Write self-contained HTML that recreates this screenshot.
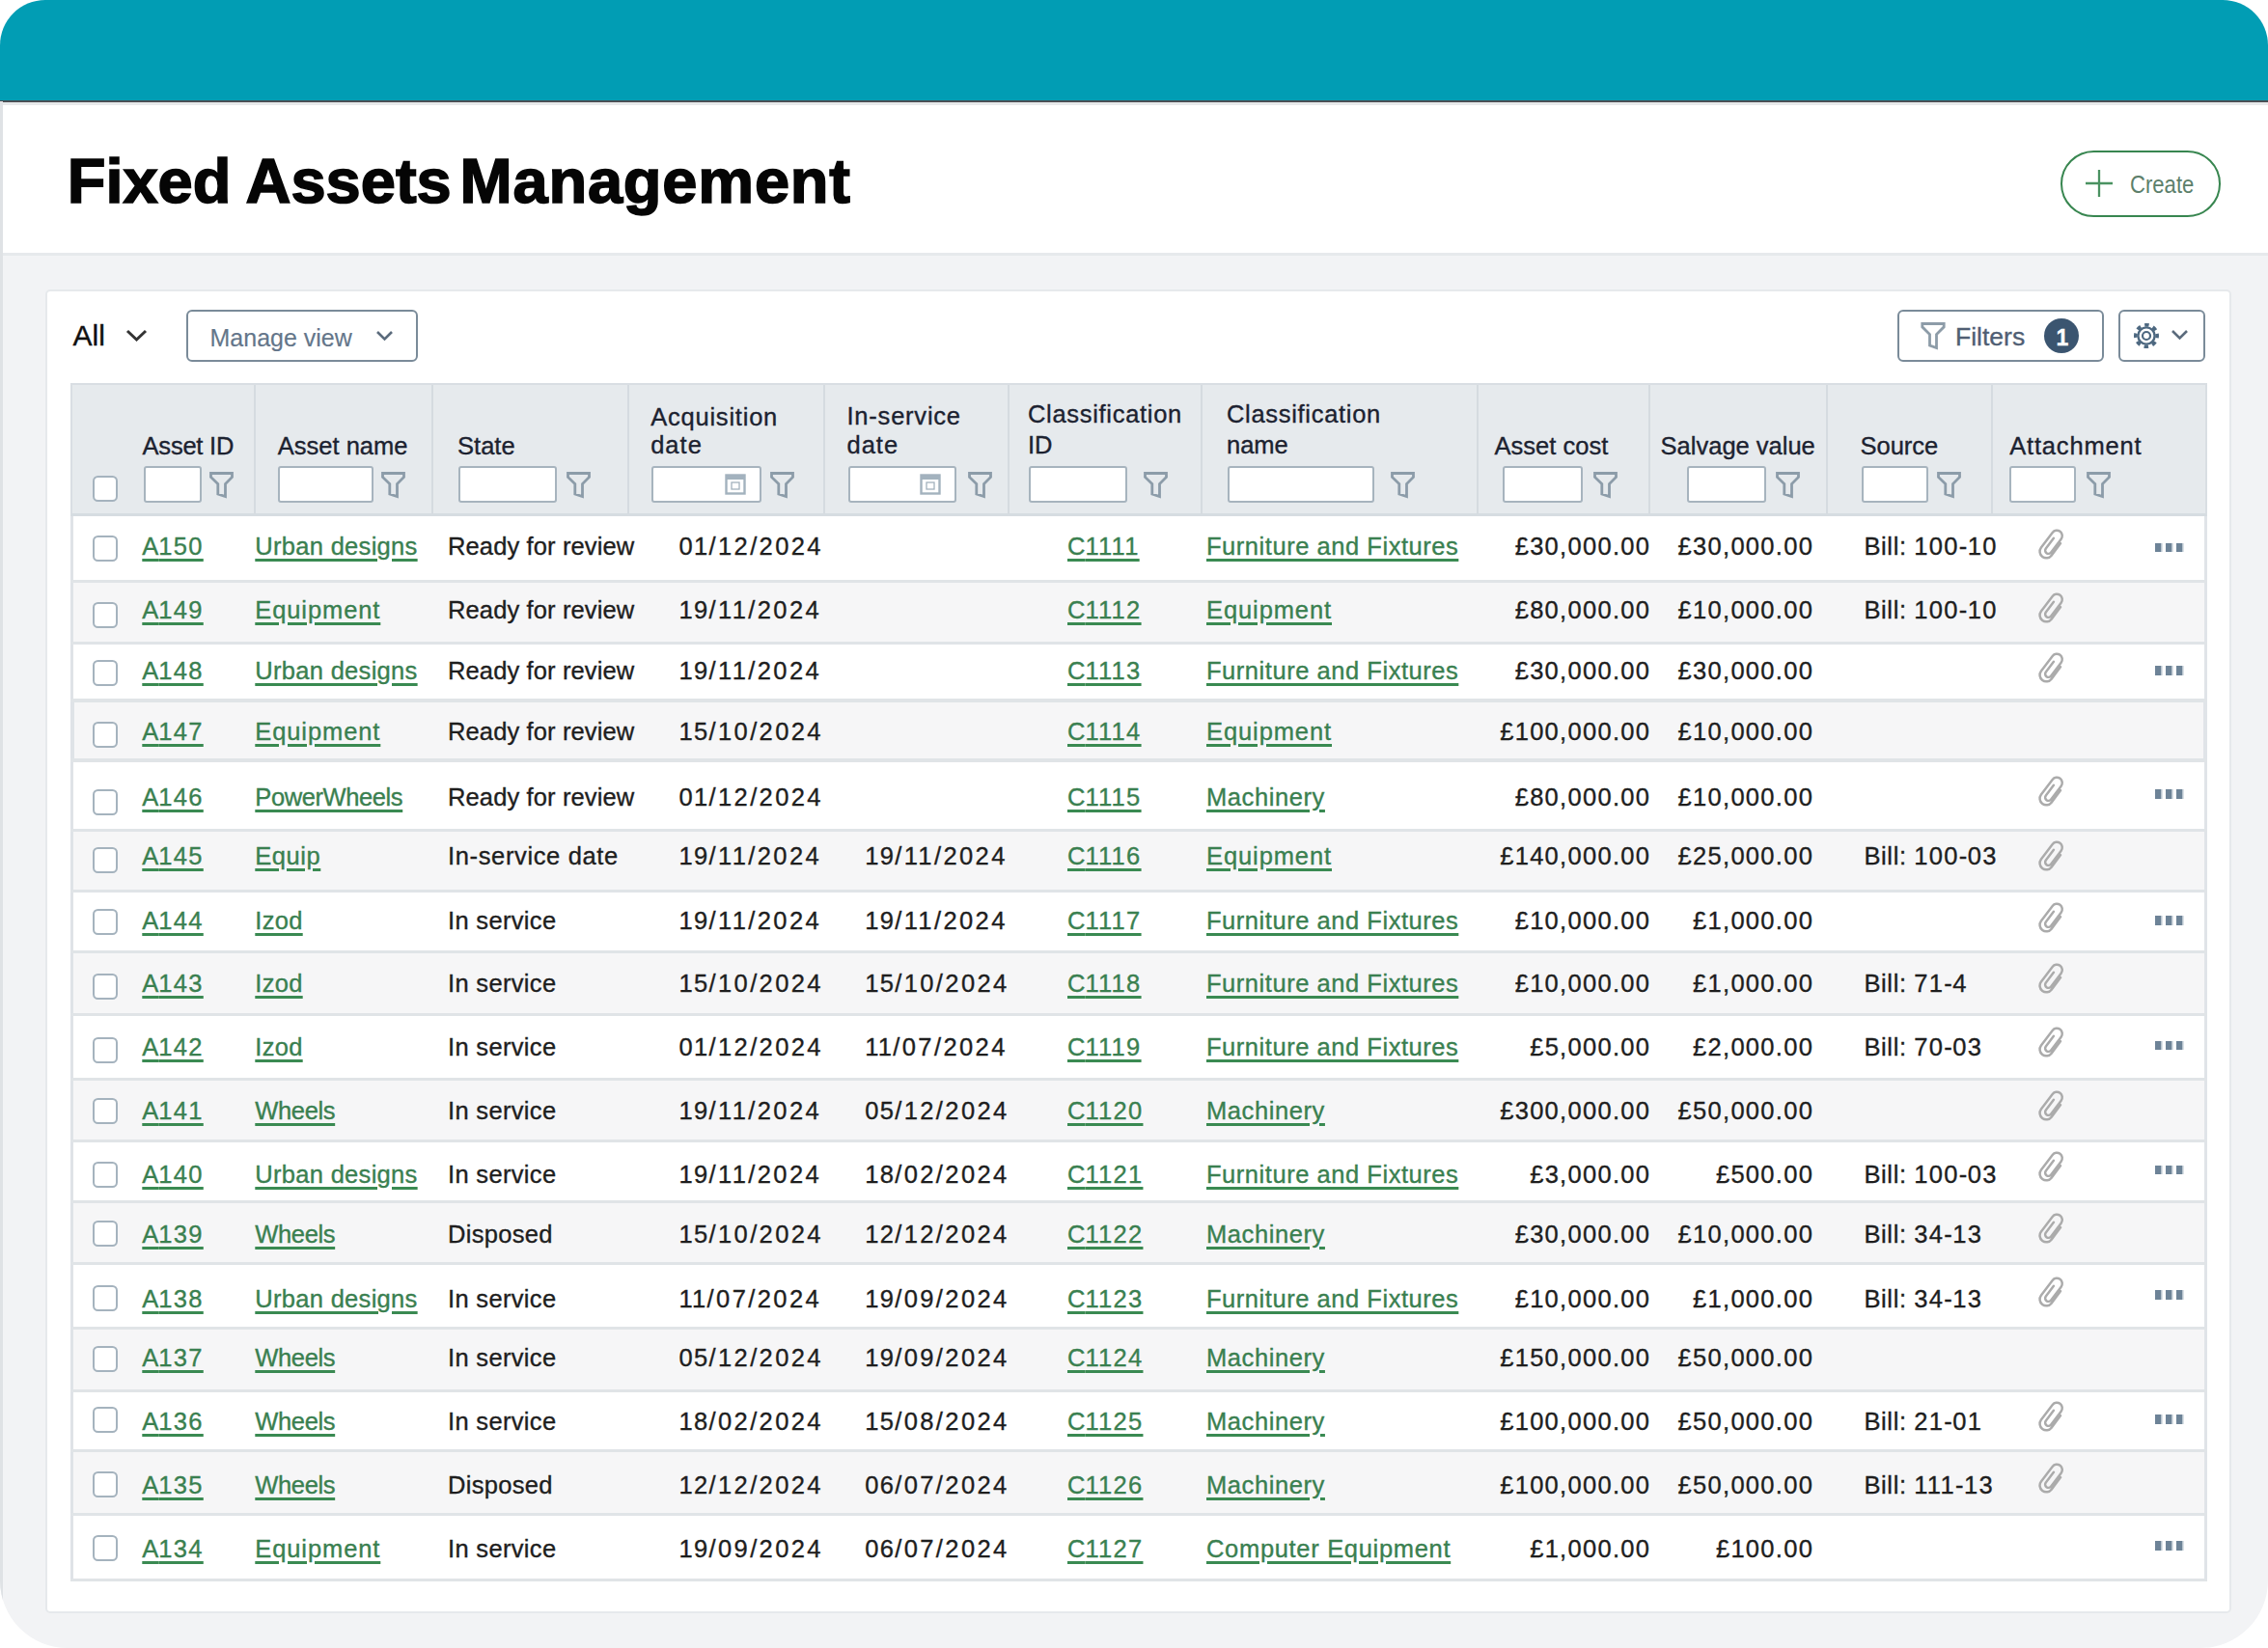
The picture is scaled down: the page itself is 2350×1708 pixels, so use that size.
<!DOCTYPE html><html><head><meta charset="utf-8"><style>
html,body{margin:0;padding:0;width:2350px;height:1708px;overflow:hidden;background:#fff;}
body{position:relative;font-family:"Liberation Sans",sans-serif;}
.t{position:absolute;white-space:nowrap;line-height:1;-webkit-text-stroke:0.35px currentColor;}
.b{position:absolute;box-sizing:border-box;}
i{font-style:normal;}
.dg{letter-spacing:1.3px;}
.sl{letter-spacing:2.4px;}
.lk{color:#3a8050;text-decoration:underline;text-decoration-color:#3a8a52;text-decoration-thickness:3px;text-underline-offset:4px;}
.nm{letter-spacing:0.3px;}
svg{position:absolute;overflow:visible;}
</style></head><body>
<div class="b" style="left:0;top:0;width:2350px;height:1708px;border-radius:47px 47px 70px 70px;overflow:hidden;background:#f2f3f5;">
<div class="b" style="left:0;top:0;width:2350px;height:105px;background:#019db4;"></div>
<div class="b" style="left:0;top:104px;width:2350px;height:2.2px;background:#4a4f55;"></div>
<div class="b" style="left:0;top:106.2px;width:2350px;height:2.8px;background:#e7e9eb;"></div>
<div class="b" style="left:0;top:109px;width:2350px;height:153px;background:#fff;"></div>
<div class="b" style="left:0;top:262px;width:2350px;height:3px;background:#e6e9ec;"></div>
<div class="b" style="left:0;top:105px;width:2.5px;height:1603px;background:#dfe2e5;"></div>
</div>
<div class="t " style="left:69.7px;top:155.0px;font-size:65px;color:#050505;font-weight:700;-webkit-text-stroke:1.6px #050505;">Fixed</div>
<div class="t " style="left:254.5px;top:155.0px;font-size:65px;color:#050505;font-weight:700;-webkit-text-stroke:1.6px #050505;">Assets</div>
<div class="t " style="left:476.5px;top:155.0px;font-size:65px;color:#050505;font-weight:700;-webkit-text-stroke:1.6px #050505;letter-spacing:0.8px;">Management</div>
<div class="b" style="left:2135px;top:156px;width:166px;height:69px;border:2.6px solid #388650;border-radius:35px;background:#fff;"></div>
<svg style="left:2160px;top:175px" width="30" height="30"><path d="M15 1V29M1 15H29" stroke="#4a9261" stroke-width="2.3"/></svg>
<div class="t " style="left:2207.0px;top:177.5px;font-size:26px;color:#5d7f6b;font-weight:400;-webkit-text-stroke:0;transform:scaleX(0.85);transform-origin:0 0;">Create</div>
<div class="b" style="left:47px;top:300px;width:2265px;height:1372px;background:#fff;border:2.5px solid #e6e9ec;border-radius:5px;"></div>
<div class="t " style="left:75.5px;top:333.2px;font-size:30px;color:#111;font-weight:400;">All</div>
<svg style="left:130px;top:341px" width="24" height="14"><path d="M2 2L11.5 11L21 2" fill="none" stroke="#333" stroke-width="3"/></svg>
<div class="b" style="left:193px;top:321px;width:240px;height:54px;border:2.5px solid #7a8b99;border-radius:6px;background:#fff;"></div>
<div class="t " style="left:217.5px;top:337.5px;font-size:25px;color:#64768a;font-weight:400;-webkit-text-stroke:0.15px currentColor;">Manage view</div>
<svg style="left:389px;top:342px" width="20" height="12"><path d="M2 2L9.5 9.5L17 2" fill="none" stroke="#5b6b7c" stroke-width="2.6"/></svg>
<div class="b" style="left:1966px;top:321px;width:214px;height:54px;border:2.5px solid #7a8b99;border-radius:6px;background:#fff;"></div>
<svg style="left:1990px;top:333px" width="27" height="30"><path d="M1.8 2.5H24.2V5.8L16.5 13.5V27.5L9.5 25V13.5L1.8 5.8Z" fill="none" stroke="#8d9ca8" stroke-width="2.8" stroke-linejoin="miter"/></svg>
<div class="t " style="left:2026.0px;top:336.0px;font-size:26.5px;color:#4f5e73;font-weight:400;">Filters</div>
<div class="b" style="left:2118px;top:330px;width:36px;height:36px;border-radius:18px;background:#3b5570;"></div>
<div class="t " style="left:2130.5px;top:338.5px;font-size:23px;color:#fff;font-weight:700;">1</div>
<div class="b" style="left:2195px;top:321px;width:90px;height:54px;border:2.5px solid #7a8b99;border-radius:6px;background:#fff;"></div>
<svg style="left:2210.3px;top:333.8px" width="28" height="28"><g fill="none" stroke="#4d6880"><circle cx="14" cy="14" r="11.2" stroke-width="3.6" stroke-dasharray="4.4 4.4" transform="rotate(-11 14 14)"/><circle cx="14" cy="14" r="8.6" stroke-width="2.4"/><circle cx="14" cy="14" r="4" stroke-width="2.2"/></g></svg>
<svg style="left:2249px;top:341px" width="20" height="12"><path d="M2 2L9.5 9.5L17 2" fill="none" stroke="#5b6b7c" stroke-width="2.6"/></svg>
<div class="b" style="left:73px;top:397px;width:2214px;height:138px;background:#e6eaed;border:2px solid #d9dee3;border-bottom:3px solid #d6dce1;"></div>
<div class="b" style="left:263.0px;top:399px;width:2px;height:134px;background:#d5dbe0;"></div>
<div class="b" style="left:447.0px;top:399px;width:2px;height:134px;background:#d5dbe0;"></div>
<div class="b" style="left:649.5px;top:399px;width:2px;height:134px;background:#d5dbe0;"></div>
<div class="b" style="left:852.5px;top:399px;width:2px;height:134px;background:#d5dbe0;"></div>
<div class="b" style="left:1043.5px;top:399px;width:2px;height:134px;background:#d5dbe0;"></div>
<div class="b" style="left:1243.5px;top:399px;width:2px;height:134px;background:#d5dbe0;"></div>
<div class="b" style="left:1529.5px;top:399px;width:2px;height:134px;background:#d5dbe0;"></div>
<div class="b" style="left:1707.5px;top:399px;width:2px;height:134px;background:#d5dbe0;"></div>
<div class="b" style="left:1891.5px;top:399px;width:2px;height:134px;background:#d5dbe0;"></div>
<div class="b" style="left:2062.8px;top:399px;width:2px;height:134px;background:#d5dbe0;"></div>
<div class="b" style="left:95.5px;top:492.5px;width:26.0px;height:27.0px;border:2.3px solid #a5b3be;border-radius:5.5px;background:#fff;"></div>
<div class="t " style="left:147.6px;top:449.9px;font-size:25.5px;color:#1c2230;font-weight:400;letter-spacing:-0.23px;">Asset ID</div>
<div class="t " style="left:287.8px;top:449.9px;font-size:25.5px;color:#1c2230;font-weight:400;">Asset name</div>
<div class="t " style="left:474.1px;top:449.9px;font-size:25.5px;color:#1c2230;font-weight:400;">State</div>
<div class="t " style="left:674.2px;top:419.6px;font-size:25.5px;color:#1c2230;font-weight:400;letter-spacing:0.78px;">Acquisition</div>
<div class="t " style="left:674.2px;top:449.4px;font-size:25.5px;color:#1c2230;font-weight:400;letter-spacing:1.0px;">date</div>
<div class="t " style="left:877.5px;top:418.9px;font-size:25.5px;color:#1c2230;font-weight:400;letter-spacing:0.78px;">In-service</div>
<div class="t " style="left:877.5px;top:449.4px;font-size:25.5px;color:#1c2230;font-weight:400;letter-spacing:1.0px;">date</div>
<div class="t " style="left:1065.0px;top:417.4px;font-size:25.5px;color:#1c2230;font-weight:400;letter-spacing:0.69px;">Classification</div>
<div class="t " style="left:1065.0px;top:449.4px;font-size:25.5px;color:#1c2230;font-weight:400;">ID</div>
<div class="t " style="left:1271.0px;top:416.9px;font-size:25.5px;color:#1c2230;font-weight:400;letter-spacing:0.69px;">Classification</div>
<div class="t " style="left:1271.0px;top:449.4px;font-size:25.5px;color:#1c2230;font-weight:400;">name</div>
<div class="t " style="left:1548.6px;top:449.9px;font-size:25.5px;color:#1c2230;font-weight:400;">Asset cost</div>
<div class="t " style="left:1720.6px;top:449.9px;font-size:25.5px;color:#1c2230;font-weight:400;">Salvage value</div>
<div class="t " style="left:1927.5px;top:449.9px;font-size:25.5px;color:#1c2230;font-weight:400;">Source</div>
<div class="t " style="left:2082.3px;top:449.9px;font-size:25.5px;color:#1c2230;font-weight:400;letter-spacing:0.8px;">Attachment</div>
<div class="b" style="left:148.5px;top:483px;width:60.0px;height:37.5px;border:2.2px solid #a7b4be;border-radius:3px;background:#fff;"></div>
<svg style="left:217.3px;top:488px" width="26" height="28"><path d="M1.5 2.5H23.5V6.5L16.5 13.5V26.5L8.8 24V13.5L1.5 6.5Z" fill="none" stroke="#8c9ca9" stroke-width="2.8" stroke-linejoin="miter"/></svg>
<div class="b" style="left:287.8px;top:483px;width:99.69999999999999px;height:37.5px;border:2.2px solid #a7b4be;border-radius:3px;background:#fff;"></div>
<svg style="left:394.5px;top:488px" width="26" height="28"><path d="M1.5 2.5H23.5V6.5L16.5 13.5V26.5L8.8 24V13.5L1.5 6.5Z" fill="none" stroke="#8c9ca9" stroke-width="2.8" stroke-linejoin="miter"/></svg>
<div class="b" style="left:474.7px;top:483px;width:102.80000000000001px;height:37.5px;border:2.2px solid #a7b4be;border-radius:3px;background:#fff;"></div>
<svg style="left:587.0px;top:488px" width="26" height="28"><path d="M1.5 2.5H23.5V6.5L16.5 13.5V26.5L8.8 24V13.5L1.5 6.5Z" fill="none" stroke="#8c9ca9" stroke-width="2.8" stroke-linejoin="miter"/></svg>
<div class="b" style="left:675.0px;top:483px;width:114.0px;height:37.5px;border:2.2px solid #a7b4be;border-radius:3px;background:#fff;"></div>
<svg style="left:750.5px;top:490px" width="24" height="24"><g fill="none" stroke="#a3b2be"><rect x="1.5" y="2.5" width="19" height="19" stroke-width="2.4"/><path d="M1.5 5H20.5" stroke-width="4"/><rect x="7" y="10" width="8" height="7" stroke-width="1.3"/></g></svg>
<svg style="left:798.4px;top:488px" width="26" height="28"><path d="M1.5 2.5H23.5V6.5L16.5 13.5V26.5L8.8 24V13.5L1.5 6.5Z" fill="none" stroke="#8c9ca9" stroke-width="2.8" stroke-linejoin="miter"/></svg>
<div class="b" style="left:879.0px;top:483px;width:112.0px;height:37.5px;border:2.2px solid #a7b4be;border-radius:3px;background:#fff;"></div>
<svg style="left:952.5px;top:490px" width="24" height="24"><g fill="none" stroke="#a3b2be"><rect x="1.5" y="2.5" width="19" height="19" stroke-width="2.4"/><path d="M1.5 5H20.5" stroke-width="4"/><rect x="7" y="10" width="8" height="7" stroke-width="1.3"/></g></svg>
<svg style="left:1003.0px;top:488px" width="26" height="28"><path d="M1.5 2.5H23.5V6.5L16.5 13.5V26.5L8.8 24V13.5L1.5 6.5Z" fill="none" stroke="#8c9ca9" stroke-width="2.8" stroke-linejoin="miter"/></svg>
<div class="b" style="left:1065.5px;top:483px;width:102.5px;height:37.5px;border:2.2px solid #a7b4be;border-radius:3px;background:#fff;"></div>
<svg style="left:1185.4px;top:488px" width="26" height="28"><path d="M1.5 2.5H23.5V6.5L16.5 13.5V26.5L8.8 24V13.5L1.5 6.5Z" fill="none" stroke="#8c9ca9" stroke-width="2.8" stroke-linejoin="miter"/></svg>
<div class="b" style="left:1271.5px;top:483px;width:152.9000000000001px;height:37.5px;border:2.2px solid #a7b4be;border-radius:3px;background:#fff;"></div>
<svg style="left:1440.6px;top:488px" width="26" height="28"><path d="M1.5 2.5H23.5V6.5L16.5 13.5V26.5L8.8 24V13.5L1.5 6.5Z" fill="none" stroke="#8c9ca9" stroke-width="2.8" stroke-linejoin="miter"/></svg>
<div class="b" style="left:1557.3px;top:483px;width:83.20000000000005px;height:37.5px;border:2.2px solid #a7b4be;border-radius:3px;background:#fff;"></div>
<svg style="left:1651.0px;top:488px" width="26" height="28"><path d="M1.5 2.5H23.5V6.5L16.5 13.5V26.5L8.8 24V13.5L1.5 6.5Z" fill="none" stroke="#8c9ca9" stroke-width="2.8" stroke-linejoin="miter"/></svg>
<div class="b" style="left:1747.6px;top:483px;width:82.60000000000014px;height:37.5px;border:2.2px solid #a7b4be;border-radius:3px;background:#fff;"></div>
<svg style="left:1840.0px;top:488px" width="26" height="28"><path d="M1.5 2.5H23.5V6.5L16.5 13.5V26.5L8.8 24V13.5L1.5 6.5Z" fill="none" stroke="#8c9ca9" stroke-width="2.8" stroke-linejoin="miter"/></svg>
<div class="b" style="left:1928.8px;top:483px;width:69.60000000000014px;height:37.5px;border:2.2px solid #a7b4be;border-radius:3px;background:#fff;"></div>
<svg style="left:2006.9px;top:488px" width="26" height="28"><path d="M1.5 2.5H23.5V6.5L16.5 13.5V26.5L8.8 24V13.5L1.5 6.5Z" fill="none" stroke="#8c9ca9" stroke-width="2.8" stroke-linejoin="miter"/></svg>
<div class="b" style="left:2082.3px;top:483px;width:68.69999999999982px;height:37.5px;border:2.2px solid #a7b4be;border-radius:3px;background:#fff;"></div>
<svg style="left:2161.6px;top:488px" width="26" height="28"><path d="M1.5 2.5H23.5V6.5L16.5 13.5V26.5L8.8 24V13.5L1.5 6.5Z" fill="none" stroke="#8c9ca9" stroke-width="2.8" stroke-linejoin="miter"/></svg>
<div class="b" style="left:73px;top:535px;width:2214px;height:67px;background:#ffffff;border-left:3.3px solid #dfe3e7;border-right:3.3px solid #e0e4e8;"></div>
<div class="b" style="left:95.5px;top:554.7px;width:26.0px;height:27.0px;border:2.3px solid #a5b3be;border-radius:5.5px;background:#fff;"></div>
<div class="t lk" style="left:147.3px;top:554.0px;font-size:25.5px;color:#3a8050;font-weight:400;">A<i class="dg">150</i></div>
<div class="t lk" style="left:264.3px;top:554.0px;font-size:25.5px;color:#3a8050;font-weight:400;letter-spacing:0.3px;">Urban designs</div>
<div class="t " style="left:464.0px;top:554.0px;font-size:25.5px;color:#1e1e1e;font-weight:400;letter-spacing:0.13px;">Ready for review</div>
<div class="t " style="left:703.5px;top:554.0px;font-size:25.5px;color:#1e1e1e;font-weight:400;"><i class="dg">01</i><i class="sl">/12</i><i class="sl">/2024</i></div>
<div class="t lk" style="left:1106.0px;top:554.0px;font-size:25.5px;color:#3a8050;font-weight:400;">C<i class="dg">1111</i></div>
<div class="t lk" style="left:1250.0px;top:554.0px;font-size:25.5px;color:#3a8050;font-weight:400;letter-spacing:0.54px;">Furniture and Fixtures</div>
<div class="t " style="right:639.7px;top:554.0px;font-size:25.5px;color:#1e1e1e;font-weight:400;letter-spacing:1.3px;">£<i class="dg">30</i>,<i class="dg">000</i>.<i class="dg">00</i></div>
<div class="t " style="right:470.8px;top:554.0px;font-size:25.5px;color:#1e1e1e;font-weight:400;letter-spacing:1.3px;">£<i class="dg">30</i>,<i class="dg">000</i>.<i class="dg">00</i></div>
<div class="t " style="left:1931.5px;top:554.0px;font-size:25.5px;color:#1e1e1e;font-weight:400;letter-spacing:0.6px;">Bill: <i class="dg">100</i>-<i class="dg">10</i></div>
<svg style="left:2109.5px;top:547.0px" width="32" height="34"><g transform="translate(16 17) scale(1.12) rotate(37) translate(-7 -15.5)"><path d="M13 10V24A6 6 0 0 1 1 24V6.5A5 5 0 0 1 11 6.5V22A3 3 0 0 1 5 22V10" fill="none" stroke="#ababab" stroke-width="2.2" stroke-linecap="round"/></g></svg>
<div class="b" style="left:2232.5px;top:562.5px;width:6.5px;height:9.5px;background:#6d8397;box-shadow:1.5px 0 0 #b9c5cf;"></div>
<div class="b" style="left:2243.5px;top:562.5px;width:6.5px;height:9.5px;background:#6d8397;box-shadow:1.5px 0 0 #b9c5cf;"></div>
<div class="b" style="left:2254.5px;top:562.5px;width:6.5px;height:9.5px;background:#6d8397;box-shadow:1.5px 0 0 #b9c5cf;"></div>
<div class="b" style="left:73px;top:602px;width:2214px;height:64px;background:#f6f6f7;border-left:3.3px solid #dfe3e7;border-right:3.3px solid #e0e4e8;"></div>
<div class="b" style="left:95.5px;top:623.8px;width:26.0px;height:27.0px;border:2.3px solid #a5b3be;border-radius:5.5px;background:#fff;"></div>
<div class="t lk" style="left:147.3px;top:620.0px;font-size:25.5px;color:#3a8050;font-weight:400;">A<i class="dg">149</i></div>
<div class="t lk" style="left:264.3px;top:620.0px;font-size:25.5px;color:#3a8050;font-weight:400;letter-spacing:0.9px;">Equipment</div>
<div class="t " style="left:464.0px;top:620.0px;font-size:25.5px;color:#1e1e1e;font-weight:400;letter-spacing:0.13px;">Ready for review</div>
<div class="t " style="left:703.5px;top:620.0px;font-size:25.5px;color:#1e1e1e;font-weight:400;"><i class="dg">19</i><i class="sl">/11</i><i class="sl">/2024</i></div>
<div class="t lk" style="left:1106.0px;top:620.0px;font-size:25.5px;color:#3a8050;font-weight:400;">C<i class="dg">1112</i></div>
<div class="t lk" style="left:1250.0px;top:620.0px;font-size:25.5px;color:#3a8050;font-weight:400;letter-spacing:0.9px;">Equipment</div>
<div class="t " style="right:639.7px;top:620.0px;font-size:25.5px;color:#1e1e1e;font-weight:400;letter-spacing:1.3px;">£<i class="dg">80</i>,<i class="dg">000</i>.<i class="dg">00</i></div>
<div class="t " style="right:470.8px;top:620.0px;font-size:25.5px;color:#1e1e1e;font-weight:400;letter-spacing:1.3px;">£<i class="dg">10</i>,<i class="dg">000</i>.<i class="dg">00</i></div>
<div class="t " style="left:1931.5px;top:620.0px;font-size:25.5px;color:#1e1e1e;font-weight:400;letter-spacing:0.6px;">Bill: <i class="dg">100</i>-<i class="dg">10</i></div>
<svg style="left:2109.5px;top:612.5px" width="32" height="34"><g transform="translate(16 17) scale(1.12) rotate(37) translate(-7 -15.5)"><path d="M13 10V24A6 6 0 0 1 1 24V6.5A5 5 0 0 1 11 6.5V22A3 3 0 0 1 5 22V10" fill="none" stroke="#ababab" stroke-width="2.2" stroke-linecap="round"/></g></svg>
<div class="b" style="left:73px;top:666px;width:2214px;height:60px;background:#ffffff;border-left:3.3px solid #dfe3e7;border-right:3.3px solid #e0e4e8;"></div>
<div class="b" style="left:95.5px;top:684.1px;width:26.0px;height:27.0px;border:2.3px solid #a5b3be;border-radius:5.5px;background:#fff;"></div>
<div class="t lk" style="left:147.3px;top:683.2px;font-size:25.5px;color:#3a8050;font-weight:400;">A<i class="dg">148</i></div>
<div class="t lk" style="left:264.3px;top:683.2px;font-size:25.5px;color:#3a8050;font-weight:400;letter-spacing:0.3px;">Urban designs</div>
<div class="t " style="left:464.0px;top:683.2px;font-size:25.5px;color:#1e1e1e;font-weight:400;letter-spacing:0.13px;">Ready for review</div>
<div class="t " style="left:703.5px;top:683.2px;font-size:25.5px;color:#1e1e1e;font-weight:400;"><i class="dg">19</i><i class="sl">/11</i><i class="sl">/2024</i></div>
<div class="t lk" style="left:1106.0px;top:683.2px;font-size:25.5px;color:#3a8050;font-weight:400;">C<i class="dg">1113</i></div>
<div class="t lk" style="left:1250.0px;top:683.2px;font-size:25.5px;color:#3a8050;font-weight:400;letter-spacing:0.54px;">Furniture and Fixtures</div>
<div class="t " style="right:639.7px;top:683.2px;font-size:25.5px;color:#1e1e1e;font-weight:400;letter-spacing:1.3px;">£<i class="dg">30</i>,<i class="dg">000</i>.<i class="dg">00</i></div>
<div class="t " style="right:470.8px;top:683.2px;font-size:25.5px;color:#1e1e1e;font-weight:400;letter-spacing:1.3px;">£<i class="dg">30</i>,<i class="dg">000</i>.<i class="dg">00</i></div>
<svg style="left:2109.5px;top:674.5px" width="32" height="34"><g transform="translate(16 17) scale(1.12) rotate(37) translate(-7 -15.5)"><path d="M13 10V24A6 6 0 0 1 1 24V6.5A5 5 0 0 1 11 6.5V22A3 3 0 0 1 5 22V10" fill="none" stroke="#ababab" stroke-width="2.2" stroke-linecap="round"/></g></svg>
<div class="b" style="left:2232.5px;top:690.0px;width:6.5px;height:9.5px;background:#6d8397;box-shadow:1.5px 0 0 #b9c5cf;"></div>
<div class="b" style="left:2243.5px;top:690.0px;width:6.5px;height:9.5px;background:#6d8397;box-shadow:1.5px 0 0 #b9c5cf;"></div>
<div class="b" style="left:2254.5px;top:690.0px;width:6.5px;height:9.5px;background:#6d8397;box-shadow:1.5px 0 0 #b9c5cf;"></div>
<div class="b" style="left:73px;top:726px;width:2214px;height:62px;background:#f6f6f7;border-left:4.6px solid #dfe3e7;border-right:4.6px solid #e0e4e8;"></div>
<div class="b" style="left:95.5px;top:747.7px;width:26.0px;height:27.0px;border:2.3px solid #a5b3be;border-radius:5.5px;background:#fff;"></div>
<div class="t lk" style="left:147.3px;top:746.0px;font-size:25.5px;color:#3a8050;font-weight:400;">A<i class="dg">147</i></div>
<div class="t lk" style="left:264.3px;top:746.0px;font-size:25.5px;color:#3a8050;font-weight:400;letter-spacing:0.9px;">Equipment</div>
<div class="t " style="left:464.0px;top:746.0px;font-size:25.5px;color:#1e1e1e;font-weight:400;letter-spacing:0.13px;">Ready for review</div>
<div class="t " style="left:703.5px;top:746.0px;font-size:25.5px;color:#1e1e1e;font-weight:400;"><i class="dg">15</i><i class="sl">/10</i><i class="sl">/2024</i></div>
<div class="t lk" style="left:1106.0px;top:746.0px;font-size:25.5px;color:#3a8050;font-weight:400;">C<i class="dg">1114</i></div>
<div class="t lk" style="left:1250.0px;top:746.0px;font-size:25.5px;color:#3a8050;font-weight:400;letter-spacing:0.9px;">Equipment</div>
<div class="t " style="right:639.7px;top:746.0px;font-size:25.5px;color:#1e1e1e;font-weight:400;letter-spacing:1.3px;">£<i class="dg">100</i>,<i class="dg">000</i>.<i class="dg">00</i></div>
<div class="t " style="right:470.8px;top:746.0px;font-size:25.5px;color:#1e1e1e;font-weight:400;letter-spacing:1.3px;">£<i class="dg">10</i>,<i class="dg">000</i>.<i class="dg">00</i></div>
<div class="b" style="left:73px;top:788px;width:2214px;height:72px;background:#ffffff;border-left:3.3px solid #dfe3e7;border-right:3.3px solid #e0e4e8;"></div>
<div class="b" style="left:95.5px;top:818.1px;width:26.0px;height:27.0px;border:2.3px solid #a5b3be;border-radius:5.5px;background:#fff;"></div>
<div class="t lk" style="left:147.3px;top:814.4px;font-size:25.5px;color:#3a8050;font-weight:400;">A<i class="dg">146</i></div>
<div class="t lk" style="left:264.3px;top:814.4px;font-size:25.5px;color:#3a8050;font-weight:400;letter-spacing:-0.4px;">PowerWheels</div>
<div class="t " style="left:464.0px;top:814.4px;font-size:25.5px;color:#1e1e1e;font-weight:400;letter-spacing:0.13px;">Ready for review</div>
<div class="t " style="left:703.5px;top:814.4px;font-size:25.5px;color:#1e1e1e;font-weight:400;"><i class="dg">01</i><i class="sl">/12</i><i class="sl">/2024</i></div>
<div class="t lk" style="left:1106.0px;top:814.4px;font-size:25.5px;color:#3a8050;font-weight:400;">C<i class="dg">1115</i></div>
<div class="t lk" style="left:1250.0px;top:814.4px;font-size:25.5px;color:#3a8050;font-weight:400;letter-spacing:0.59px;">Machinery</div>
<div class="t " style="right:639.7px;top:814.4px;font-size:25.5px;color:#1e1e1e;font-weight:400;letter-spacing:1.3px;">£<i class="dg">80</i>,<i class="dg">000</i>.<i class="dg">00</i></div>
<div class="t " style="right:470.8px;top:814.4px;font-size:25.5px;color:#1e1e1e;font-weight:400;letter-spacing:1.3px;">£<i class="dg">10</i>,<i class="dg">000</i>.<i class="dg">00</i></div>
<svg style="left:2109.5px;top:802.5px" width="32" height="34"><g transform="translate(16 17) scale(1.12) rotate(37) translate(-7 -15.5)"><path d="M13 10V24A6 6 0 0 1 1 24V6.5A5 5 0 0 1 11 6.5V22A3 3 0 0 1 5 22V10" fill="none" stroke="#ababab" stroke-width="2.2" stroke-linecap="round"/></g></svg>
<div class="b" style="left:2232.5px;top:818.0px;width:6.5px;height:9.5px;background:#6d8397;box-shadow:1.5px 0 0 #b9c5cf;"></div>
<div class="b" style="left:2243.5px;top:818.0px;width:6.5px;height:9.5px;background:#6d8397;box-shadow:1.5px 0 0 #b9c5cf;"></div>
<div class="b" style="left:2254.5px;top:818.0px;width:6.5px;height:9.5px;background:#6d8397;box-shadow:1.5px 0 0 #b9c5cf;"></div>
<div class="b" style="left:73px;top:860px;width:2214px;height:63.5px;background:#f6f6f7;border-left:3.3px solid #dfe3e7;border-right:3.3px solid #e0e4e8;"></div>
<div class="b" style="left:95.5px;top:878.3px;width:26.0px;height:27.0px;border:2.3px solid #a5b3be;border-radius:5.5px;background:#fff;"></div>
<div class="t lk" style="left:147.3px;top:875.4px;font-size:25.5px;color:#3a8050;font-weight:400;">A<i class="dg">145</i></div>
<div class="t lk" style="left:264.3px;top:875.4px;font-size:25.5px;color:#3a8050;font-weight:400;letter-spacing:0.55px;">Equip</div>
<div class="t " style="left:464.0px;top:875.4px;font-size:25.5px;color:#1e1e1e;font-weight:400;letter-spacing:0.64px;">In-service date</div>
<div class="t " style="left:703.5px;top:875.4px;font-size:25.5px;color:#1e1e1e;font-weight:400;"><i class="dg">19</i><i class="sl">/11</i><i class="sl">/2024</i></div>
<div class="t " style="left:896.2px;top:875.4px;font-size:25.5px;color:#1e1e1e;font-weight:400;"><i class="dg">19</i><i class="sl">/11</i><i class="sl">/2024</i></div>
<div class="t lk" style="left:1106.0px;top:875.4px;font-size:25.5px;color:#3a8050;font-weight:400;">C<i class="dg">1116</i></div>
<div class="t lk" style="left:1250.0px;top:875.4px;font-size:25.5px;color:#3a8050;font-weight:400;letter-spacing:0.9px;">Equipment</div>
<div class="t " style="right:639.7px;top:875.4px;font-size:25.5px;color:#1e1e1e;font-weight:400;letter-spacing:1.3px;">£<i class="dg">140</i>,<i class="dg">000</i>.<i class="dg">00</i></div>
<div class="t " style="right:470.8px;top:875.4px;font-size:25.5px;color:#1e1e1e;font-weight:400;letter-spacing:1.3px;">£<i class="dg">25</i>,<i class="dg">000</i>.<i class="dg">00</i></div>
<div class="t " style="left:1931.5px;top:875.4px;font-size:25.5px;color:#1e1e1e;font-weight:400;letter-spacing:0.6px;">Bill: <i class="dg">100</i>-<i class="dg">03</i></div>
<svg style="left:2109.5px;top:870.2px" width="32" height="34"><g transform="translate(16 17) scale(1.12) rotate(37) translate(-7 -15.5)"><path d="M13 10V24A6 6 0 0 1 1 24V6.5A5 5 0 0 1 11 6.5V22A3 3 0 0 1 5 22V10" fill="none" stroke="#ababab" stroke-width="2.2" stroke-linecap="round"/></g></svg>
<div class="b" style="left:73px;top:923.5px;width:2214px;height:63.0px;background:#ffffff;border-left:3.3px solid #dfe3e7;border-right:3.3px solid #e0e4e8;"></div>
<div class="b" style="left:95.5px;top:941.7px;width:26.0px;height:27.0px;border:2.3px solid #a5b3be;border-radius:5.5px;background:#fff;"></div>
<div class="t lk" style="left:147.3px;top:941.6px;font-size:25.5px;color:#3a8050;font-weight:400;">A<i class="dg">144</i></div>
<div class="t lk" style="left:264.3px;top:941.6px;font-size:25.5px;color:#3a8050;font-weight:400;letter-spacing:0.3px;">Izod</div>
<div class="t " style="left:464.0px;top:941.6px;font-size:25.5px;color:#1e1e1e;font-weight:400;letter-spacing:0.33px;">In service</div>
<div class="t " style="left:703.5px;top:941.6px;font-size:25.5px;color:#1e1e1e;font-weight:400;"><i class="dg">19</i><i class="sl">/11</i><i class="sl">/2024</i></div>
<div class="t " style="left:896.2px;top:941.6px;font-size:25.5px;color:#1e1e1e;font-weight:400;"><i class="dg">19</i><i class="sl">/11</i><i class="sl">/2024</i></div>
<div class="t lk" style="left:1106.0px;top:941.6px;font-size:25.5px;color:#3a8050;font-weight:400;">C<i class="dg">1117</i></div>
<div class="t lk" style="left:1250.0px;top:941.6px;font-size:25.5px;color:#3a8050;font-weight:400;letter-spacing:0.54px;">Furniture and Fixtures</div>
<div class="t " style="right:639.7px;top:941.6px;font-size:25.5px;color:#1e1e1e;font-weight:400;letter-spacing:1.3px;">£<i class="dg">10</i>,<i class="dg">000</i>.<i class="dg">00</i></div>
<div class="t " style="right:470.8px;top:941.6px;font-size:25.5px;color:#1e1e1e;font-weight:400;letter-spacing:1.3px;">£<i class="dg">1</i>,<i class="dg">000</i>.<i class="dg">00</i></div>
<svg style="left:2109.5px;top:933.5px" width="32" height="34"><g transform="translate(16 17) scale(1.12) rotate(37) translate(-7 -15.5)"><path d="M13 10V24A6 6 0 0 1 1 24V6.5A5 5 0 0 1 11 6.5V22A3 3 0 0 1 5 22V10" fill="none" stroke="#ababab" stroke-width="2.2" stroke-linecap="round"/></g></svg>
<div class="b" style="left:2232.5px;top:949.0px;width:6.5px;height:9.5px;background:#6d8397;box-shadow:1.5px 0 0 #b9c5cf;"></div>
<div class="b" style="left:2243.5px;top:949.0px;width:6.5px;height:9.5px;background:#6d8397;box-shadow:1.5px 0 0 #b9c5cf;"></div>
<div class="b" style="left:2254.5px;top:949.0px;width:6.5px;height:9.5px;background:#6d8397;box-shadow:1.5px 0 0 #b9c5cf;"></div>
<div class="b" style="left:73px;top:986.5px;width:2214px;height:64.5px;background:#f6f6f7;border-left:3.3px solid #dfe3e7;border-right:3.3px solid #e0e4e8;"></div>
<div class="b" style="left:95.5px;top:1008.7px;width:26.0px;height:27.0px;border:2.3px solid #a5b3be;border-radius:5.5px;background:#fff;"></div>
<div class="t lk" style="left:147.3px;top:1006.7px;font-size:25.5px;color:#3a8050;font-weight:400;">A<i class="dg">143</i></div>
<div class="t lk" style="left:264.3px;top:1006.7px;font-size:25.5px;color:#3a8050;font-weight:400;letter-spacing:0.3px;">Izod</div>
<div class="t " style="left:464.0px;top:1006.7px;font-size:25.5px;color:#1e1e1e;font-weight:400;letter-spacing:0.33px;">In service</div>
<div class="t " style="left:703.5px;top:1006.7px;font-size:25.5px;color:#1e1e1e;font-weight:400;"><i class="dg">15</i><i class="sl">/10</i><i class="sl">/2024</i></div>
<div class="t " style="left:896.2px;top:1006.7px;font-size:25.5px;color:#1e1e1e;font-weight:400;"><i class="dg">15</i><i class="sl">/10</i><i class="sl">/2024</i></div>
<div class="t lk" style="left:1106.0px;top:1006.7px;font-size:25.5px;color:#3a8050;font-weight:400;">C<i class="dg">1118</i></div>
<div class="t lk" style="left:1250.0px;top:1006.7px;font-size:25.5px;color:#3a8050;font-weight:400;letter-spacing:0.54px;">Furniture and Fixtures</div>
<div class="t " style="right:639.7px;top:1006.7px;font-size:25.5px;color:#1e1e1e;font-weight:400;letter-spacing:1.3px;">£<i class="dg">10</i>,<i class="dg">000</i>.<i class="dg">00</i></div>
<div class="t " style="right:470.8px;top:1006.7px;font-size:25.5px;color:#1e1e1e;font-weight:400;letter-spacing:1.3px;">£<i class="dg">1</i>,<i class="dg">000</i>.<i class="dg">00</i></div>
<div class="t " style="left:1931.5px;top:1006.7px;font-size:25.5px;color:#1e1e1e;font-weight:400;letter-spacing:0.6px;">Bill: <i class="dg">71</i>-<i class="dg">4</i></div>
<svg style="left:2109.5px;top:997.2px" width="32" height="34"><g transform="translate(16 17) scale(1.12) rotate(37) translate(-7 -15.5)"><path d="M13 10V24A6 6 0 0 1 1 24V6.5A5 5 0 0 1 11 6.5V22A3 3 0 0 1 5 22V10" fill="none" stroke="#ababab" stroke-width="2.2" stroke-linecap="round"/></g></svg>
<div class="b" style="left:73px;top:1051px;width:2214px;height:67.40000000000009px;background:#ffffff;border-left:3.3px solid #dfe3e7;border-right:3.3px solid #e0e4e8;"></div>
<div class="b" style="left:95.5px;top:1074.7px;width:26.0px;height:27.0px;border:2.3px solid #a5b3be;border-radius:5.5px;background:#fff;"></div>
<div class="t lk" style="left:147.3px;top:1073.0px;font-size:25.5px;color:#3a8050;font-weight:400;">A<i class="dg">142</i></div>
<div class="t lk" style="left:264.3px;top:1073.0px;font-size:25.5px;color:#3a8050;font-weight:400;letter-spacing:0.3px;">Izod</div>
<div class="t " style="left:464.0px;top:1073.0px;font-size:25.5px;color:#1e1e1e;font-weight:400;letter-spacing:0.33px;">In service</div>
<div class="t " style="left:703.5px;top:1073.0px;font-size:25.5px;color:#1e1e1e;font-weight:400;"><i class="dg">01</i><i class="sl">/12</i><i class="sl">/2024</i></div>
<div class="t " style="left:896.2px;top:1073.0px;font-size:25.5px;color:#1e1e1e;font-weight:400;"><i class="dg">11</i><i class="sl">/07</i><i class="sl">/2024</i></div>
<div class="t lk" style="left:1106.0px;top:1073.0px;font-size:25.5px;color:#3a8050;font-weight:400;">C<i class="dg">1119</i></div>
<div class="t lk" style="left:1250.0px;top:1073.0px;font-size:25.5px;color:#3a8050;font-weight:400;letter-spacing:0.54px;">Furniture and Fixtures</div>
<div class="t " style="right:639.7px;top:1073.0px;font-size:25.5px;color:#1e1e1e;font-weight:400;letter-spacing:1.3px;">£<i class="dg">5</i>,<i class="dg">000</i>.<i class="dg">00</i></div>
<div class="t " style="right:470.8px;top:1073.0px;font-size:25.5px;color:#1e1e1e;font-weight:400;letter-spacing:1.3px;">£<i class="dg">2</i>,<i class="dg">000</i>.<i class="dg">00</i></div>
<div class="t " style="left:1931.5px;top:1073.0px;font-size:25.5px;color:#1e1e1e;font-weight:400;letter-spacing:0.6px;">Bill: <i class="dg">70</i>-<i class="dg">03</i></div>
<svg style="left:2109.5px;top:1063.2px" width="32" height="34"><g transform="translate(16 17) scale(1.12) rotate(37) translate(-7 -15.5)"><path d="M13 10V24A6 6 0 0 1 1 24V6.5A5 5 0 0 1 11 6.5V22A3 3 0 0 1 5 22V10" fill="none" stroke="#ababab" stroke-width="2.2" stroke-linecap="round"/></g></svg>
<div class="b" style="left:2232.5px;top:1078.7px;width:6.5px;height:9.5px;background:#6d8397;box-shadow:1.5px 0 0 #b9c5cf;"></div>
<div class="b" style="left:2243.5px;top:1078.7px;width:6.5px;height:9.5px;background:#6d8397;box-shadow:1.5px 0 0 #b9c5cf;"></div>
<div class="b" style="left:2254.5px;top:1078.7px;width:6.5px;height:9.5px;background:#6d8397;box-shadow:1.5px 0 0 #b9c5cf;"></div>
<div class="b" style="left:73px;top:1118.4px;width:2214px;height:63.59999999999991px;background:#f6f6f7;border-left:3.3px solid #dfe3e7;border-right:3.3px solid #e0e4e8;"></div>
<div class="b" style="left:95.5px;top:1137.8px;width:26.0px;height:27.0px;border:2.3px solid #a5b3be;border-radius:5.5px;background:#fff;"></div>
<div class="t lk" style="left:147.3px;top:1139.0px;font-size:25.5px;color:#3a8050;font-weight:400;">A<i class="dg">141</i></div>
<div class="t lk" style="left:264.3px;top:1139.0px;font-size:25.5px;color:#3a8050;font-weight:400;letter-spacing:-0.36px;">Wheels</div>
<div class="t " style="left:464.0px;top:1139.0px;font-size:25.5px;color:#1e1e1e;font-weight:400;letter-spacing:0.33px;">In service</div>
<div class="t " style="left:703.5px;top:1139.0px;font-size:25.5px;color:#1e1e1e;font-weight:400;"><i class="dg">19</i><i class="sl">/11</i><i class="sl">/2024</i></div>
<div class="t " style="left:896.2px;top:1139.0px;font-size:25.5px;color:#1e1e1e;font-weight:400;"><i class="dg">05</i><i class="sl">/12</i><i class="sl">/2024</i></div>
<div class="t lk" style="left:1106.0px;top:1139.0px;font-size:25.5px;color:#3a8050;font-weight:400;">C<i class="dg">1120</i></div>
<div class="t lk" style="left:1250.0px;top:1139.0px;font-size:25.5px;color:#3a8050;font-weight:400;letter-spacing:0.59px;">Machinery</div>
<div class="t " style="right:639.7px;top:1139.0px;font-size:25.5px;color:#1e1e1e;font-weight:400;letter-spacing:1.3px;">£<i class="dg">300</i>,<i class="dg">000</i>.<i class="dg">00</i></div>
<div class="t " style="right:470.8px;top:1139.0px;font-size:25.5px;color:#1e1e1e;font-weight:400;letter-spacing:1.3px;">£<i class="dg">50</i>,<i class="dg">000</i>.<i class="dg">00</i></div>
<svg style="left:2109.5px;top:1128.7px" width="32" height="34"><g transform="translate(16 17) scale(1.12) rotate(37) translate(-7 -15.5)"><path d="M13 10V24A6 6 0 0 1 1 24V6.5A5 5 0 0 1 11 6.5V22A3 3 0 0 1 5 22V10" fill="none" stroke="#ababab" stroke-width="2.2" stroke-linecap="round"/></g></svg>
<div class="b" style="left:73px;top:1182px;width:2214px;height:63px;background:#ffffff;border-left:3.3px solid #dfe3e7;border-right:3.3px solid #e0e4e8;"></div>
<div class="b" style="left:95.5px;top:1204.2px;width:26.0px;height:27.0px;border:2.3px solid #a5b3be;border-radius:5.5px;background:#fff;"></div>
<div class="t lk" style="left:147.3px;top:1204.8px;font-size:25.5px;color:#3a8050;font-weight:400;">A<i class="dg">140</i></div>
<div class="t lk" style="left:264.3px;top:1204.8px;font-size:25.5px;color:#3a8050;font-weight:400;letter-spacing:0.3px;">Urban designs</div>
<div class="t " style="left:464.0px;top:1204.8px;font-size:25.5px;color:#1e1e1e;font-weight:400;letter-spacing:0.33px;">In service</div>
<div class="t " style="left:703.5px;top:1204.8px;font-size:25.5px;color:#1e1e1e;font-weight:400;"><i class="dg">19</i><i class="sl">/11</i><i class="sl">/2024</i></div>
<div class="t " style="left:896.2px;top:1204.8px;font-size:25.5px;color:#1e1e1e;font-weight:400;"><i class="dg">18</i><i class="sl">/02</i><i class="sl">/2024</i></div>
<div class="t lk" style="left:1106.0px;top:1204.8px;font-size:25.5px;color:#3a8050;font-weight:400;">C<i class="dg">1121</i></div>
<div class="t lk" style="left:1250.0px;top:1204.8px;font-size:25.5px;color:#3a8050;font-weight:400;letter-spacing:0.54px;">Furniture and Fixtures</div>
<div class="t " style="right:639.7px;top:1204.8px;font-size:25.5px;color:#1e1e1e;font-weight:400;letter-spacing:1.3px;">£<i class="dg">3</i>,<i class="dg">000</i>.<i class="dg">00</i></div>
<div class="t " style="right:470.8px;top:1204.8px;font-size:25.5px;color:#1e1e1e;font-weight:400;letter-spacing:1.3px;">£<i class="dg">500</i>.<i class="dg">00</i></div>
<div class="t " style="left:1931.5px;top:1204.8px;font-size:25.5px;color:#1e1e1e;font-weight:400;letter-spacing:0.6px;">Bill: <i class="dg">100</i>-<i class="dg">03</i></div>
<svg style="left:2109.5px;top:1192.0px" width="32" height="34"><g transform="translate(16 17) scale(1.12) rotate(37) translate(-7 -15.5)"><path d="M13 10V24A6 6 0 0 1 1 24V6.5A5 5 0 0 1 11 6.5V22A3 3 0 0 1 5 22V10" fill="none" stroke="#ababab" stroke-width="2.2" stroke-linecap="round"/></g></svg>
<div class="b" style="left:2232.5px;top:1207.5px;width:6.5px;height:9.5px;background:#6d8397;box-shadow:1.5px 0 0 #b9c5cf;"></div>
<div class="b" style="left:2243.5px;top:1207.5px;width:6.5px;height:9.5px;background:#6d8397;box-shadow:1.5px 0 0 #b9c5cf;"></div>
<div class="b" style="left:2254.5px;top:1207.5px;width:6.5px;height:9.5px;background:#6d8397;box-shadow:1.5px 0 0 #b9c5cf;"></div>
<div class="b" style="left:73px;top:1245px;width:2214px;height:64.59999999999991px;background:#f6f6f7;border-left:3.3px solid #dfe3e7;border-right:3.3px solid #e0e4e8;"></div>
<div class="b" style="left:95.5px;top:1264.7px;width:26.0px;height:27.0px;border:2.3px solid #a5b3be;border-radius:5.5px;background:#fff;"></div>
<div class="t lk" style="left:147.3px;top:1267.2px;font-size:25.5px;color:#3a8050;font-weight:400;">A<i class="dg">139</i></div>
<div class="t lk" style="left:264.3px;top:1267.2px;font-size:25.5px;color:#3a8050;font-weight:400;letter-spacing:-0.36px;">Wheels</div>
<div class="t " style="left:464.0px;top:1267.2px;font-size:25.5px;color:#1e1e1e;font-weight:400;letter-spacing:0.3px;">Disposed</div>
<div class="t " style="left:703.5px;top:1267.2px;font-size:25.5px;color:#1e1e1e;font-weight:400;"><i class="dg">15</i><i class="sl">/10</i><i class="sl">/2024</i></div>
<div class="t " style="left:896.2px;top:1267.2px;font-size:25.5px;color:#1e1e1e;font-weight:400;"><i class="dg">12</i><i class="sl">/12</i><i class="sl">/2024</i></div>
<div class="t lk" style="left:1106.0px;top:1267.2px;font-size:25.5px;color:#3a8050;font-weight:400;">C<i class="dg">1122</i></div>
<div class="t lk" style="left:1250.0px;top:1267.2px;font-size:25.5px;color:#3a8050;font-weight:400;letter-spacing:0.59px;">Machinery</div>
<div class="t " style="right:639.7px;top:1267.2px;font-size:25.5px;color:#1e1e1e;font-weight:400;letter-spacing:1.3px;">£<i class="dg">30</i>,<i class="dg">000</i>.<i class="dg">00</i></div>
<div class="t " style="right:470.8px;top:1267.2px;font-size:25.5px;color:#1e1e1e;font-weight:400;letter-spacing:1.3px;">£<i class="dg">10</i>,<i class="dg">000</i>.<i class="dg">00</i></div>
<div class="t " style="left:1931.5px;top:1267.2px;font-size:25.5px;color:#1e1e1e;font-weight:400;letter-spacing:0.6px;">Bill: <i class="dg">34</i>-<i class="dg">13</i></div>
<svg style="left:2109.5px;top:1255.8px" width="32" height="34"><g transform="translate(16 17) scale(1.12) rotate(37) translate(-7 -15.5)"><path d="M13 10V24A6 6 0 0 1 1 24V6.5A5 5 0 0 1 11 6.5V22A3 3 0 0 1 5 22V10" fill="none" stroke="#ababab" stroke-width="2.2" stroke-linecap="round"/></g></svg>
<div class="b" style="left:73px;top:1309.6px;width:2214px;height:66.90000000000009px;background:#ffffff;border-left:3.3px solid #dfe3e7;border-right:3.3px solid #e0e4e8;"></div>
<div class="b" style="left:95.5px;top:1331.6px;width:26.0px;height:27.0px;border:2.3px solid #a5b3be;border-radius:5.5px;background:#fff;"></div>
<div class="t lk" style="left:147.3px;top:1334.4px;font-size:25.5px;color:#3a8050;font-weight:400;">A<i class="dg">138</i></div>
<div class="t lk" style="left:264.3px;top:1334.4px;font-size:25.5px;color:#3a8050;font-weight:400;letter-spacing:0.3px;">Urban designs</div>
<div class="t " style="left:464.0px;top:1334.4px;font-size:25.5px;color:#1e1e1e;font-weight:400;letter-spacing:0.33px;">In service</div>
<div class="t " style="left:703.5px;top:1334.4px;font-size:25.5px;color:#1e1e1e;font-weight:400;"><i class="dg">11</i><i class="sl">/07</i><i class="sl">/2024</i></div>
<div class="t " style="left:896.2px;top:1334.4px;font-size:25.5px;color:#1e1e1e;font-weight:400;"><i class="dg">19</i><i class="sl">/09</i><i class="sl">/2024</i></div>
<div class="t lk" style="left:1106.0px;top:1334.4px;font-size:25.5px;color:#3a8050;font-weight:400;">C<i class="dg">1123</i></div>
<div class="t lk" style="left:1250.0px;top:1334.4px;font-size:25.5px;color:#3a8050;font-weight:400;letter-spacing:0.54px;">Furniture and Fixtures</div>
<div class="t " style="right:639.7px;top:1334.4px;font-size:25.5px;color:#1e1e1e;font-weight:400;letter-spacing:1.3px;">£<i class="dg">10</i>,<i class="dg">000</i>.<i class="dg">00</i></div>
<div class="t " style="right:470.8px;top:1334.4px;font-size:25.5px;color:#1e1e1e;font-weight:400;letter-spacing:1.3px;">£<i class="dg">1</i>,<i class="dg">000</i>.<i class="dg">00</i></div>
<div class="t " style="left:1931.5px;top:1334.4px;font-size:25.5px;color:#1e1e1e;font-weight:400;letter-spacing:0.6px;">Bill: <i class="dg">34</i>-<i class="dg">13</i></div>
<svg style="left:2109.5px;top:1321.5px" width="32" height="34"><g transform="translate(16 17) scale(1.12) rotate(37) translate(-7 -15.5)"><path d="M13 10V24A6 6 0 0 1 1 24V6.5A5 5 0 0 1 11 6.5V22A3 3 0 0 1 5 22V10" fill="none" stroke="#ababab" stroke-width="2.2" stroke-linecap="round"/></g></svg>
<div class="b" style="left:2232.5px;top:1337.0px;width:6.5px;height:9.5px;background:#6d8397;box-shadow:1.5px 0 0 #b9c5cf;"></div>
<div class="b" style="left:2243.5px;top:1337.0px;width:6.5px;height:9.5px;background:#6d8397;box-shadow:1.5px 0 0 #b9c5cf;"></div>
<div class="b" style="left:2254.5px;top:1337.0px;width:6.5px;height:9.5px;background:#6d8397;box-shadow:1.5px 0 0 #b9c5cf;"></div>
<div class="b" style="left:73px;top:1376.5px;width:2214px;height:64.70000000000005px;background:#f6f6f7;border-left:3.3px solid #dfe3e7;border-right:3.3px solid #e0e4e8;"></div>
<div class="b" style="left:95.5px;top:1395.2px;width:26.0px;height:27.0px;border:2.3px solid #a5b3be;border-radius:5.5px;background:#fff;"></div>
<div class="t lk" style="left:147.3px;top:1395.4px;font-size:25.5px;color:#3a8050;font-weight:400;">A<i class="dg">137</i></div>
<div class="t lk" style="left:264.3px;top:1395.4px;font-size:25.5px;color:#3a8050;font-weight:400;letter-spacing:-0.36px;">Wheels</div>
<div class="t " style="left:464.0px;top:1395.4px;font-size:25.5px;color:#1e1e1e;font-weight:400;letter-spacing:0.33px;">In service</div>
<div class="t " style="left:703.5px;top:1395.4px;font-size:25.5px;color:#1e1e1e;font-weight:400;"><i class="dg">05</i><i class="sl">/12</i><i class="sl">/2024</i></div>
<div class="t " style="left:896.2px;top:1395.4px;font-size:25.5px;color:#1e1e1e;font-weight:400;"><i class="dg">19</i><i class="sl">/09</i><i class="sl">/2024</i></div>
<div class="t lk" style="left:1106.0px;top:1395.4px;font-size:25.5px;color:#3a8050;font-weight:400;">C<i class="dg">1124</i></div>
<div class="t lk" style="left:1250.0px;top:1395.4px;font-size:25.5px;color:#3a8050;font-weight:400;letter-spacing:0.59px;">Machinery</div>
<div class="t " style="right:639.7px;top:1395.4px;font-size:25.5px;color:#1e1e1e;font-weight:400;letter-spacing:1.3px;">£<i class="dg">150</i>,<i class="dg">000</i>.<i class="dg">00</i></div>
<div class="t " style="right:470.8px;top:1395.4px;font-size:25.5px;color:#1e1e1e;font-weight:400;letter-spacing:1.3px;">£<i class="dg">50</i>,<i class="dg">000</i>.<i class="dg">00</i></div>
<div class="b" style="left:73px;top:1441.2px;width:2214px;height:62.299999999999955px;background:#ffffff;border-left:3.3px solid #dfe3e7;border-right:3.3px solid #e0e4e8;"></div>
<div class="b" style="left:95.5px;top:1458.2px;width:26.0px;height:27.0px;border:2.3px solid #a5b3be;border-radius:5.5px;background:#fff;"></div>
<div class="t lk" style="left:147.3px;top:1460.6px;font-size:25.5px;color:#3a8050;font-weight:400;">A<i class="dg">136</i></div>
<div class="t lk" style="left:264.3px;top:1460.6px;font-size:25.5px;color:#3a8050;font-weight:400;letter-spacing:-0.36px;">Wheels</div>
<div class="t " style="left:464.0px;top:1460.6px;font-size:25.5px;color:#1e1e1e;font-weight:400;letter-spacing:0.33px;">In service</div>
<div class="t " style="left:703.5px;top:1460.6px;font-size:25.5px;color:#1e1e1e;font-weight:400;"><i class="dg">18</i><i class="sl">/02</i><i class="sl">/2024</i></div>
<div class="t " style="left:896.2px;top:1460.6px;font-size:25.5px;color:#1e1e1e;font-weight:400;"><i class="dg">15</i><i class="sl">/08</i><i class="sl">/2024</i></div>
<div class="t lk" style="left:1106.0px;top:1460.6px;font-size:25.5px;color:#3a8050;font-weight:400;">C<i class="dg">1125</i></div>
<div class="t lk" style="left:1250.0px;top:1460.6px;font-size:25.5px;color:#3a8050;font-weight:400;letter-spacing:0.59px;">Machinery</div>
<div class="t " style="right:639.7px;top:1460.6px;font-size:25.5px;color:#1e1e1e;font-weight:400;letter-spacing:1.3px;">£<i class="dg">100</i>,<i class="dg">000</i>.<i class="dg">00</i></div>
<div class="t " style="right:470.8px;top:1460.6px;font-size:25.5px;color:#1e1e1e;font-weight:400;letter-spacing:1.3px;">£<i class="dg">50</i>,<i class="dg">000</i>.<i class="dg">00</i></div>
<div class="t " style="left:1931.5px;top:1460.6px;font-size:25.5px;color:#1e1e1e;font-weight:400;letter-spacing:0.6px;">Bill: <i class="dg">21</i>-<i class="dg">01</i></div>
<svg style="left:2109.5px;top:1450.8px" width="32" height="34"><g transform="translate(16 17) scale(1.12) rotate(37) translate(-7 -15.5)"><path d="M13 10V24A6 6 0 0 1 1 24V6.5A5 5 0 0 1 11 6.5V22A3 3 0 0 1 5 22V10" fill="none" stroke="#ababab" stroke-width="2.2" stroke-linecap="round"/></g></svg>
<div class="b" style="left:2232.5px;top:1466.3px;width:6.5px;height:9.5px;background:#6d8397;box-shadow:1.5px 0 0 #b9c5cf;"></div>
<div class="b" style="left:2243.5px;top:1466.3px;width:6.5px;height:9.5px;background:#6d8397;box-shadow:1.5px 0 0 #b9c5cf;"></div>
<div class="b" style="left:2254.5px;top:1466.3px;width:6.5px;height:9.5px;background:#6d8397;box-shadow:1.5px 0 0 #b9c5cf;"></div>
<div class="b" style="left:73px;top:1503.5px;width:2214px;height:65.5px;background:#f6f6f7;border-left:3.3px solid #dfe3e7;border-right:3.3px solid #e0e4e8;"></div>
<div class="b" style="left:95.5px;top:1525.0px;width:26.0px;height:27.0px;border:2.3px solid #a5b3be;border-radius:5.5px;background:#fff;"></div>
<div class="t lk" style="left:147.3px;top:1526.6px;font-size:25.5px;color:#3a8050;font-weight:400;">A<i class="dg">135</i></div>
<div class="t lk" style="left:264.3px;top:1526.6px;font-size:25.5px;color:#3a8050;font-weight:400;letter-spacing:-0.36px;">Wheels</div>
<div class="t " style="left:464.0px;top:1526.6px;font-size:25.5px;color:#1e1e1e;font-weight:400;letter-spacing:0.3px;">Disposed</div>
<div class="t " style="left:703.5px;top:1526.6px;font-size:25.5px;color:#1e1e1e;font-weight:400;"><i class="dg">12</i><i class="sl">/12</i><i class="sl">/2024</i></div>
<div class="t " style="left:896.2px;top:1526.6px;font-size:25.5px;color:#1e1e1e;font-weight:400;"><i class="dg">06</i><i class="sl">/07</i><i class="sl">/2024</i></div>
<div class="t lk" style="left:1106.0px;top:1526.6px;font-size:25.5px;color:#3a8050;font-weight:400;">C<i class="dg">1126</i></div>
<div class="t lk" style="left:1250.0px;top:1526.6px;font-size:25.5px;color:#3a8050;font-weight:400;letter-spacing:0.59px;">Machinery</div>
<div class="t " style="right:639.7px;top:1526.6px;font-size:25.5px;color:#1e1e1e;font-weight:400;letter-spacing:1.3px;">£<i class="dg">100</i>,<i class="dg">000</i>.<i class="dg">00</i></div>
<div class="t " style="right:470.8px;top:1526.6px;font-size:25.5px;color:#1e1e1e;font-weight:400;letter-spacing:1.3px;">£<i class="dg">50</i>,<i class="dg">000</i>.<i class="dg">00</i></div>
<div class="t " style="left:1931.5px;top:1526.6px;font-size:25.5px;color:#1e1e1e;font-weight:400;letter-spacing:0.6px;">Bill: <i class="dg">111</i>-<i class="dg">13</i></div>
<svg style="left:2109.5px;top:1514.8px" width="32" height="34"><g transform="translate(16 17) scale(1.12) rotate(37) translate(-7 -15.5)"><path d="M13 10V24A6 6 0 0 1 1 24V6.5A5 5 0 0 1 11 6.5V22A3 3 0 0 1 5 22V10" fill="none" stroke="#ababab" stroke-width="2.2" stroke-linecap="round"/></g></svg>
<div class="b" style="left:73px;top:1569px;width:2214px;height:68.59999999999991px;background:#ffffff;border-left:3.3px solid #dfe3e7;border-right:3.3px solid #e0e4e8;"></div>
<div class="b" style="left:95.5px;top:1591.1px;width:26.0px;height:27.0px;border:2.3px solid #a5b3be;border-radius:5.5px;background:#fff;"></div>
<div class="t lk" style="left:147.3px;top:1592.6px;font-size:25.5px;color:#3a8050;font-weight:400;">A<i class="dg">134</i></div>
<div class="t lk" style="left:264.3px;top:1592.6px;font-size:25.5px;color:#3a8050;font-weight:400;letter-spacing:0.9px;">Equipment</div>
<div class="t " style="left:464.0px;top:1592.6px;font-size:25.5px;color:#1e1e1e;font-weight:400;letter-spacing:0.33px;">In service</div>
<div class="t " style="left:703.5px;top:1592.6px;font-size:25.5px;color:#1e1e1e;font-weight:400;"><i class="dg">19</i><i class="sl">/09</i><i class="sl">/2024</i></div>
<div class="t " style="left:896.2px;top:1592.6px;font-size:25.5px;color:#1e1e1e;font-weight:400;"><i class="dg">06</i><i class="sl">/07</i><i class="sl">/2024</i></div>
<div class="t lk" style="left:1106.0px;top:1592.6px;font-size:25.5px;color:#3a8050;font-weight:400;">C<i class="dg">1127</i></div>
<div class="t lk" style="left:1250.0px;top:1592.6px;font-size:25.5px;color:#3a8050;font-weight:400;letter-spacing:0.68px;">Computer Equipment</div>
<div class="t " style="right:639.7px;top:1592.6px;font-size:25.5px;color:#1e1e1e;font-weight:400;letter-spacing:1.3px;">£<i class="dg">1</i>,<i class="dg">000</i>.<i class="dg">00</i></div>
<div class="t " style="right:470.8px;top:1592.6px;font-size:25.5px;color:#1e1e1e;font-weight:400;letter-spacing:1.3px;">£<i class="dg">100</i>.<i class="dg">00</i></div>
<div class="b" style="left:2232.5px;top:1597.3px;width:6.5px;height:9.5px;background:#6d8397;box-shadow:1.5px 0 0 #b9c5cf;"></div>
<div class="b" style="left:2243.5px;top:1597.3px;width:6.5px;height:9.5px;background:#6d8397;box-shadow:1.5px 0 0 #b9c5cf;"></div>
<div class="b" style="left:2254.5px;top:1597.3px;width:6.5px;height:9.5px;background:#6d8397;box-shadow:1.5px 0 0 #b9c5cf;"></div>
<div class="b" style="left:73px;top:600.5px;width:2214px;height:3px;background:#e0e4e7;"></div>
<div class="b" style="left:73px;top:664.5px;width:2214px;height:3px;background:#e0e4e7;"></div>
<div class="b" style="left:73px;top:724.0px;width:2214px;height:4px;background:#e0e4e7;"></div>
<div class="b" style="left:73px;top:786.0px;width:2214px;height:4px;background:#e0e4e7;"></div>
<div class="b" style="left:73px;top:858.5px;width:2214px;height:3px;background:#e0e4e7;"></div>
<div class="b" style="left:73px;top:922.0px;width:2214px;height:3px;background:#e0e4e7;"></div>
<div class="b" style="left:73px;top:985.0px;width:2214px;height:3px;background:#e0e4e7;"></div>
<div class="b" style="left:73px;top:1049.5px;width:2214px;height:3px;background:#e0e4e7;"></div>
<div class="b" style="left:73px;top:1116.9px;width:2214px;height:3px;background:#e0e4e7;"></div>
<div class="b" style="left:73px;top:1180.5px;width:2214px;height:3px;background:#e0e4e7;"></div>
<div class="b" style="left:73px;top:1243.5px;width:2214px;height:3px;background:#e0e4e7;"></div>
<div class="b" style="left:73px;top:1308.1px;width:2214px;height:3px;background:#e0e4e7;"></div>
<div class="b" style="left:73px;top:1375.0px;width:2214px;height:3px;background:#e0e4e7;"></div>
<div class="b" style="left:73px;top:1439.7px;width:2214px;height:3px;background:#e0e4e7;"></div>
<div class="b" style="left:73px;top:1502.0px;width:2214px;height:3px;background:#e0e4e7;"></div>
<div class="b" style="left:73px;top:1567.5px;width:2214px;height:3px;background:#e0e4e7;"></div>
<div class="b" style="left:73px;top:1636.1px;width:2214px;height:3.2px;background:#e0e4e7;"></div>
</body></html>
